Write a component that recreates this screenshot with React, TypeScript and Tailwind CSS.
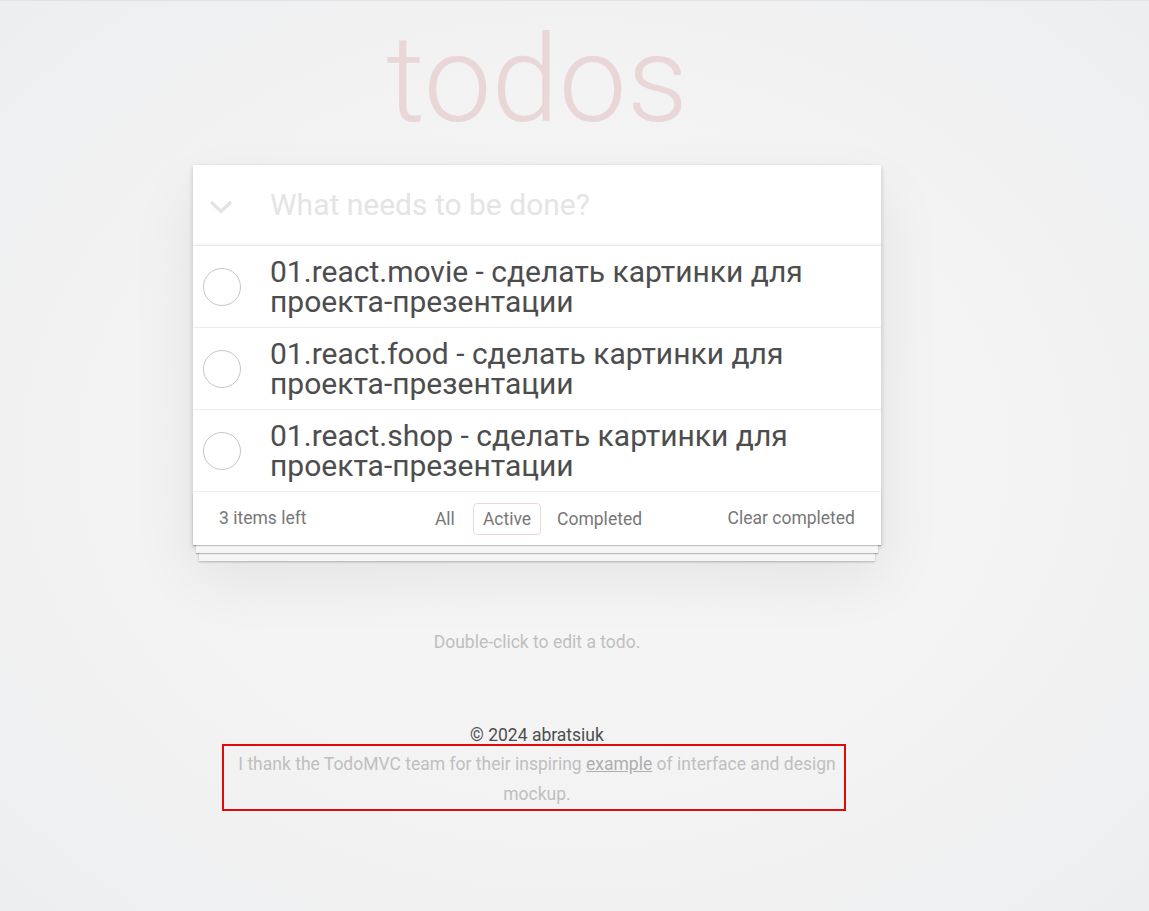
import React from "react";

const todos = [
  "01.react.movie - сделать картинки для проекта-презентации",
  "01.react.food - сделать картинки для проекта-презентации",
  "01.react.shop - сделать картинки для проекта-презентации",
];

export default function App() {
  return (
    <div className="min-h-[911px] w-full border-t border-[#e2e1e8] bg-[radial-gradient(ellipse_at_center,#f6f6f6_0%,#f3f3f3_55%,#edeef0_100%)] font-['Roboto','Liberation_Sans',sans-serif] flex flex-col items-center pr-[75px]">
      <h1 className="mt-[17px] h-[125px] text-[121px] leading-[125px] font-light text-[#e9d6d6] text-center select-none">
        todos
      </h1>

      <section className="relative mt-[22px] w-[688px] bg-white shadow-[0_2px_5px_0_rgba(0,0,0,0.2),0_30px_60px_0_rgba(0,0,0,0.08)]">
        <div className="flex h-[80px] items-center shadow-[inset_0_-2px_1px_rgba(0,0,0,0.03)]">
          <div className="flex w-[77px] items-center pl-[15px]">
            <svg width="26" height="14" viewBox="0 0 26 14" className="mt-[4px]">
              <polyline points="3,2 13,11.5 23,2" fill="none" stroke="#e3e3e3" strokeWidth="3.2" />
            </svg>
          </div>
          <input
            className="flex-1 bg-transparent pr-[19px] text-[30px] leading-[40px] text-[#4d4d4d] outline-none placeholder:text-[#e4e4e4]"
            placeholder="What needs to be done?"
          />
        </div>

        <ul className="border-t border-[#ececec]">
          {todos.map((t) => (
            <li key={t} className="flex h-[82px] items-center border-b border-[#ededed]">
              <div className="ml-[10px] mr-[29px] h-[38px] w-[38px] shrink-0 rounded-full border border-[#c6c6c6]" />
              <span className="pr-[19px] text-[30px] leading-[30px] text-[#4d4d4d]">{t}</span>
            </li>
          ))}
        </ul>

        <footer className="relative flex h-[53px] items-center justify-between px-[26px] text-[17.5px] text-[#777777]">
          <div className="pointer-events-none absolute inset-x-0 bottom-0 h-[52px] shadow-[0_1px_1px_rgba(0,0,0,0.22),0_11px_0_-3px_#f6f6f6,0_12px_1px_-3px_rgba(0,0,0,0.25),0_22px_0_-6px_#f6f6f6,0_23px_2px_-6px_rgba(0,0,0,0.25)]" />
          <span className="relative">3 items left</span>
          <ul className="absolute inset-x-0 flex justify-center pl-[3px]">
            <li>
              <span className="mx-[4px] block rounded-[4px] border border-transparent px-[9px] py-[4px] leading-[22px]">All</span>
            </li>
            <li>
              <span className="mx-[4px] block rounded-[4px] border border-[#efd6d6] px-[9px] py-[4px] leading-[22px]">Active</span>
            </li>
            <li>
              <span className="ml-[2px] mr-[4px] block rounded-[4px] border border-transparent px-[9px] py-[4px] leading-[22px]">Completed</span>
            </li>
          </ul>
          <span className="relative">Clear completed</span>
        </footer>
      </section>

      <p className="mt-[82px] text-[17.5px] leading-[30px] text-[#bfbfbf]">Double-click to edit a todo.</p>

      <div className="mt-[68px] flex flex-col items-center">
        <p className="text-[17.5px] leading-[20px] text-[#4d4d4d]">© 2024 abratsiuk</p>
        <div className="mr-[6px] -mt-[1px] flex h-[67px] w-[624px] items-center justify-center border-2 border-[#e00a0a] pl-[8px] pr-[2px] pt-[3px]">
          <p className="text-center text-[17.5px] leading-[30px] text-[#bfbfbf]">
            I thank the TodoMVC team for their inspiring{" "}
            <span className="underline text-[#aeaeae]">example</span> of interface and design mockup.
          </p>
        </div>
      </div>
    </div>
  );
}
